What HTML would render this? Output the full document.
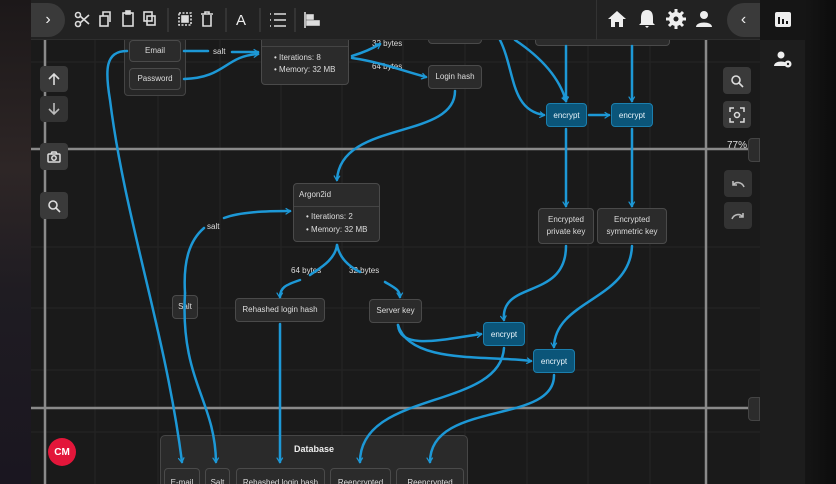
<!DOCTYPE html>
<html style="overflow:hidden;width:836px;height:484px"><head><meta charset="utf-8"><style>
*{margin:0;padding:0;box-sizing:border-box}
body{width:836px;height:484px;overflow:hidden;background:#1a1a1a;font-family:"Liberation Sans",sans-serif;position:relative}
.abs{position:absolute}
.node{position:absolute;background:#2b2b2b;border:1px solid #4a4a4a;border-radius:4px;color:#ddd;font-size:8px;display:flex;align-items:center;justify-content:center;text-align:center;line-height:12px}
.enc{position:absolute;background:#0b5579;border:1px solid #1b7fae;border-radius:4px;color:#e8f4fa;font-size:8px;display:flex;align-items:center;justify-content:center}
.lbl{position:absolute;color:#ddd;font-size:8px}
.btn{position:absolute;width:28px;height:27px;background:#3a3a3a;border-radius:4px;display:flex;align-items:center;justify-content:center}
</style></head><body>
<div class="abs" style="left:0;top:0;width:836px;height:484px;overflow:hidden">
<div class="abs" style="left:0;top:0;width:31px;height:484px;background:linear-gradient(180deg,#1c1819 0%,#2e2626 35%,#1f1c22 60%,#1a1620 100%)"></div>
<div class="abs" style="left:805px;top:0;width:31px;height:484px;background:linear-gradient(90deg,#151515,#0c0c0c)"></div>
<div class="abs" style="left:760px;top:0;width:45px;height:484px;background:#1d1d1d"></div>
<div class="abs" style="left:760px;top:0;width:45px;height:40px;background:#151515"></div>
<svg class="abs" style="left:31px;top:0" width="729" height="484">
<g stroke="#252525" stroke-width="1">
<line x1="64" y1="0" x2="64" y2="484"/><line x1="127" y1="0" x2="127" y2="484"/><line x1="189" y1="0" x2="189" y2="484"/><line x1="250" y1="0" x2="250" y2="484"/><line x1="311" y1="0" x2="311" y2="484"/><line x1="372" y1="0" x2="372" y2="484"/><line x1="434" y1="0" x2="434" y2="484"/><line x1="496" y1="0" x2="496" y2="484"/><line x1="557" y1="0" x2="557" y2="484"/><line x1="619" y1="0" x2="619" y2="484"/>
<line x1="0" y1="62" x2="729" y2="62"/><line x1="0" y1="247" x2="729" y2="247"/><line x1="0" y1="308" x2="729" y2="308"/><line x1="0" y1="370" x2="729" y2="370"/><line x1="0" y1="432" x2="729" y2="432"/>
</g>
<g stroke="#8a8a8a" stroke-width="2.5">
<line x1="0" y1="149" x2="729" y2="149"/><line x1="0" y1="408" x2="729" y2="408"/>
<line x1="14" y1="40" x2="14" y2="484"/><line x1="675" y1="40" x2="675" y2="484"/>
</g>
</svg>
<div class="abs" style="left:124px;top:30px;width:62px;height:66px;background:#262626;border:1px solid #444;border-radius:4px"></div>
<div class="node" style="left:129px;top:40px;width:52px;height:22px">Email</div>
<div class="node" style="left:129px;top:68px;width:52px;height:22px">Password</div>
<div class="node" style="left:261px;top:28px;width:88px;height:57px;display:block;text-align:left"><div style="border-bottom:1px solid #444;height:18px"></div><div style="padding:5px 0 0 12px;line-height:12px">• Iterations: 8<br>• Memory: 32 MB</div></div>
<div class="node" style="left:428px;top:20px;width:54px;height:24px"></div>
<div class="node" style="left:535px;top:20px;width:135px;height:26px"></div>
<div class="node" style="left:428px;top:65px;width:54px;height:24px">Login hash</div>
<div class="enc" style="left:546px;top:103px;width:41px;height:24px">encrypt</div>
<div class="enc" style="left:611px;top:103px;width:42px;height:24px">encrypt</div>
<div class="node" style="left:538px;top:208px;width:56px;height:36px">Encrypted<br>private key</div>
<div class="node" style="left:597px;top:208px;width:70px;height:36px">Encrypted<br>symmetric key</div>
<div class="node" style="left:293px;top:183px;width:87px;height:59px;display:block;text-align:left"><div style="border-bottom:1px solid #444;height:23px;padding:5px 0 0 5px">Argon2id</div><div style="padding:4px 0 0 12px;line-height:12.5px">• Iterations: 2<br>• Memory: 32 MB</div></div>
<div class="node" style="left:172px;top:295px;width:26px;height:24px">Salt</div>
<div class="node" style="left:235px;top:298px;width:90px;height:24px">Rehashed login hash</div>
<div class="node" style="left:369px;top:299px;width:53px;height:24px">Server key</div>
<div class="enc" style="left:483px;top:322px;width:42px;height:24px">encrypt</div>
<div class="enc" style="left:533px;top:349px;width:42px;height:24px">encrypt</div>
<div class="abs" style="left:160px;top:435px;width:308px;height:60px;background:#2a2a2a;border:1px solid #464646;border-radius:5px;color:#eee;font-size:9px;font-weight:bold;text-align:center;padding-top:8px">Database</div>
<div class="node" style="left:164px;top:468px;width:36px;height:24px;align-items:flex-start;padding-top:8px">E-mail</div>
<div class="node" style="left:205px;top:468px;width:25px;height:24px;align-items:flex-start;padding-top:8px">Salt</div>
<div class="node" style="left:236px;top:468px;width:89px;height:24px;align-items:flex-start;padding-top:8px">Rehashed login hash</div>
<div class="node" style="left:330px;top:468px;width:61px;height:24px;align-items:flex-start;padding-top:8px">Reencrypted</div>
<div class="node" style="left:396px;top:468px;width:68px;height:24px;align-items:flex-start;padding-top:8px">Reencrypted</div>
<div class="lbl" style="left:213px;top:47px">salt</div>
<div class="lbl" style="left:372px;top:39px">32 bytes</div>
<div class="lbl" style="left:372px;top:62px">64 bytes</div>
<div class="lbl" style="left:207px;top:222px">salt</div>
<div class="lbl" style="left:291px;top:266px">64 bytes</div>
<div class="lbl" style="left:349px;top:266px">32 bytes</div>
<svg class="abs" style="left:0;top:0" width="836" height="484" fill="none" stroke="#1d98d6" stroke-width="2.5" stroke-linecap="round">
<defs><marker id="a" viewBox="0 0 10 10" refX="9" refY="5" markerWidth="5" markerHeight="5" orient="auto" markerUnits="userSpaceOnUse" style="overflow:visible"><path d="M1 0 L9 5 L1 10" stroke="#1d98d6" stroke-width="2.2" fill="none" transform="scale(1.1)"/></marker></defs>
<g marker-end="url(#a)">
<path d="M184 51 L208 51 M232 52 L258 52" />
<path d="M184 79 C225 78 225 56 258 54"/>
<path d="M352 56 C365 52 375 47 380 44"/>
<path d="M352 58 C380 62 400 70 426 77"/>
<path d="M127 51 C105 51 105 70 110 100 C125 220 165 330 182 462"/>
<path d="M185 293 C180 380 215 400 216 462"/>
<path d="M185 293 C183 260 190 240 204 228 M224 218 C240 212 265 211 290 211"/>
<path d="M455 91 C455 140 340 120 337 180"/>
<path d="M337 245 C335 260 320 268 310 275 M300 280 C285 285 280 288 280 297"/>
<path d="M337 245 C340 260 352 268 360 272 M385 282 C395 288 400 290 400 297"/>
<path d="M280 324 L280 462"/>
<path d="M398 325 C400 350 440 340 481 334"/>
<path d="M398 325 C410 365 490 355 531 361"/>
<path d="M566 246 C566 300 500 280 504 320"/>
<path d="M632 246 C630 300 555 300 554 347"/>
<path d="M504 348 C500 410 360 390 360 462"/>
<path d="M554 375 C555 425 430 400 430 462"/>
<path d="M500 40 C515 70 510 110 544 115"/>
<path d="M515 40 C545 60 560 80 566 101"/>
<path d="M566 46 L566 101"/>
<path d="M632 46 L632 101"/>
<path d="M589 115 L609 115"/>
<path d="M566 129 L566 206"/>
<path d="M632 129 L632 206"/>
</g>
</svg>
<div class="abs" style="left:31px;top:0;width:729px;height:40px;background:#222;border-bottom:1px solid #2e2e2e"></div>
<div class="abs" style="left:596px;top:0;width:1px;height:40px;background:#333"></div>
<div class="abs" style="left:31px;top:3px;width:34px;height:34px;background:#3a3a3a;border-radius:0 17px 17px 0;color:#eee;font-size:16px;display:flex;align-items:center;justify-content:center">›</div>
<div class="abs" style="left:727px;top:3px;width:33px;height:34px;background:#3a3a3a;border-radius:17px 0 0 17px;color:#eee;font-size:16px;display:flex;align-items:center;justify-content:center">‹</div>
<svg class="abs" style="left:0;top:0" width="760" height="40" fill="none" stroke="#ddd" stroke-width="1.6">
<circle cx="78" cy="24" r="2.5"/><circle cx="78" cy="15" r="2.5"/><path d="M80 16 L89 24 M80 23 L89 15"/>
<rect x="100" y="16" width="8" height="10"/><path d="M103 16 V12 H110 V22"/>
<rect x="123" y="13" width="10" height="13"/><rect x="126" y="11" width="4" height="3" fill="#ddd"/>
<rect x="144" y="12" width="8" height="9"/><rect x="147" y="16" width="8" height="9"/>
<line x1="168" y1="8" x2="168" y2="32" stroke="#3a3a3a"/>
<rect x="179" y="13" width="12" height="12" stroke-dasharray="2 1.5"/><rect x="182" y="16" width="6" height="6" fill="#ddd"/>
<path d="M201 14 H213 M205 14 V12 H209 V14 M203 15 V26 H211 V15"/>
<line x1="226" y1="8" x2="226" y2="32" stroke="#3a3a3a"/>
<text x="236" y="25" fill="#eee" stroke="none" font-size="15" font-family="Liberation Sans">A</text>
<line x1="260" y1="8" x2="260" y2="32" stroke="#3a3a3a"/>
<path d="M274 14 H286 M274 20 H286 M274 26 H286 M270 14 H271 M270 20 H271 M270 26 H271"/>
<line x1="295" y1="8" x2="295" y2="32" stroke="#3a3a3a"/>
<path d="M305 12 V28"/><rect x="307" y="15" width="6" height="4" fill="#ddd"/><rect x="307" y="21" width="12" height="4" fill="#ddd"/>
<g fill="#eee" stroke="none">
<path d="M617 11 L608 19 H611 V27 H615 V22 H619 V27 H623 V19 H626 Z"/>
<path d="M647 10 C642 10 641 14 641 18 V23 L639 25 H655 L653 23 V18 C653 14 652 10 647 10 Z M645 26 H649 L647 28 Z"/>
<circle cx="676" cy="19" r="7"/>
<path d="M676 9 V29 M666 19 H686 M669 12 L683 26 M683 12 L669 26" stroke="#eee" stroke-width="3"/>
<circle cx="676" cy="19" r="2.5" fill="#222"/>
<circle cx="704" cy="15" r="4"/><path d="M696 27 C696 21 712 21 712 27 Z"/>
</g>
</svg>
<svg class="abs" style="left:760px;top:0" width="45" height="80">
<rect x="15" y="12" width="16" height="15" rx="2" fill="#eee"/><rect x="18" y="17" width="2" height="7" fill="#151515"/><rect x="22" y="19" width="2" height="5" fill="#151515"/><rect x="26" y="21" width="2" height="3" fill="#151515"/>
<circle cx="21" cy="55" r="3.5" fill="#eee"/><path d="M14 66 C14 60 28 60 28 66 Z" fill="#eee"/><circle cx="28" cy="64" r="3.5" fill="#eee"/><circle cx="28" cy="64" r="1.2" fill="#1d1d1d"/>
</svg>
<div class="btn" style="left:40px;top:66px;height:26px"><svg width="14" height="14" fill="none" stroke="#ddd" stroke-width="1.6"><path d="M7 13 V2 M2 7 L7 2 L12 7"/></svg></div>
<div class="btn" style="left:40px;top:96px;height:26px;background:#333"><svg width="14" height="14" fill="none" stroke="#bbb" stroke-width="1.6"><path d="M7 1 V12 M2 7 L7 12 L12 7"/></svg></div>
<div class="btn" style="left:40px;top:143px"><svg width="14" height="12" fill="none" stroke="#ddd" stroke-width="1.5"><rect x="1" y="3" width="12" height="8" rx="1"/><circle cx="7" cy="7" r="2.2"/><path d="M4 3 L5 1 H9 L10 3"/></svg></div>
<div class="btn" style="left:40px;top:192px"><svg width="14" height="14" fill="none" stroke="#ddd" stroke-width="1.6"><circle cx="6" cy="6" r="4"/><path d="M9 9 L13 13"/></svg></div>
<div class="abs" style="left:48px;top:438px;width:28px;height:28px;border-radius:50%;background:#e3163a;color:#fff;font-size:10px;font-weight:bold;display:flex;align-items:center;justify-content:center">CM</div>
<div class="btn" style="left:723px;top:67px"><svg width="14" height="14" fill="none" stroke="#ddd" stroke-width="1.6"><circle cx="6" cy="6" r="4"/><path d="M9 9 L13 13"/></svg></div>
<div class="btn" style="left:723px;top:101px"><svg width="16" height="16" fill="none" stroke="#ddd" stroke-width="1.5"><path d="M1 5 V1 H5 M11 1 H15 V5 M15 11 V15 H11 M5 15 H1 V11"/><circle cx="8" cy="8" r="2.5"/></svg></div>
<div class="abs" style="left:748px;top:138px;width:12px;height:24px;background:#2c2c2c;border-radius:4px 0 0 4px;border:1px solid #444"></div>
<div class="abs" style="left:727px;top:140px;color:#ddd;font-size:10px">77%</div>
<div class="btn" style="left:724px;top:170px;background:#333"><svg width="14" height="10" fill="none" stroke="#bbb" stroke-width="1.6"><path d="M13 8 C11 3 5 2 2 6 M2 2 V6 H6"/></svg></div>
<div class="btn" style="left:724px;top:202px;background:#333"><svg width="14" height="10" fill="none" stroke="#bbb" stroke-width="1.6"><path d="M1 8 C3 3 9 2 12 6 M12 2 V6 H8"/></svg></div>
<div class="abs" style="left:748px;top:397px;width:12px;height:24px;background:#2c2c2c;border-radius:4px 0 0 4px;border:1px solid #444"></div>
</div>
</body></html>
